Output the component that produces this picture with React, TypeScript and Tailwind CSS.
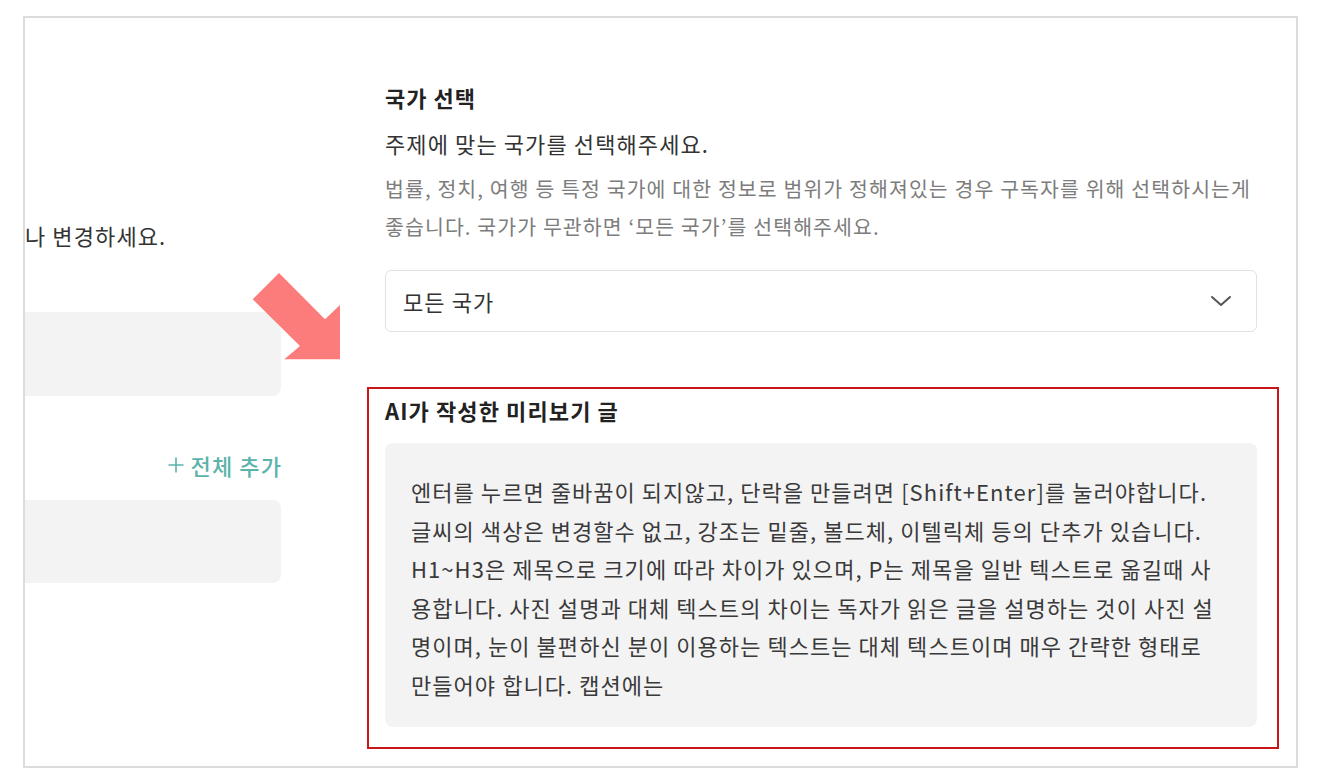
import React from 'react';

const FONT = { fontFamily: '"Noto Sans CJK KR", "Noto Sans", sans-serif' };

const previewLines = [
  '엔터를 누르면 줄바꿈이 되지않고, 단락을 만들려면 [Shift+Enter]를 눌러야합니다.',
  '글씨의 색상은 변경할수 없고, 강조는 밑줄, 볼드체, 이텔릭체 등의 단추가 있습니다.',
  'H1~H3은 제목으로 크기에 따라 차이가 있으며, P는 제목을 일반 텍스트로 옮길때 사',
  '용합니다. 사진 설명과 대체 텍스트의 차이는 독자가 읽은 글을 설명하는 것이 사진 설',
  '명이며, 눈이 불편하신 분이 이용하는 텍스트는 대체 텍스트이며 매우 간략한 형태로',
  '만들어야 합니다. 캡션에는',
];

function Arrow() {
  return (
    <svg
      className="absolute left-[250px] top-[270px]"
      width="92"
      height="92"
      viewBox="0 0 92 92"
      aria-hidden
    >
      <polygon
        points="29,3 75,49.3 90,35 90,89.3 34.3,89.3 50,76 2.7,29.3"
        fill="#fb7c7a"
      />
    </svg>
  );
}

function Chevron() {
  return (
    <svg width="22" height="12" viewBox="0 0 22 12" aria-hidden>
      <polyline
        points="2,2 11,10 20,2"
        fill="none"
        stroke="#555"
        strokeWidth="2"
        strokeLinecap="round"
        strokeLinejoin="round"
      />
    </svg>
  );
}

function PlusIcon() {
  return (
    <svg width="18" height="18" viewBox="0 0 18 18" aria-hidden>
      <path d="M9 1.5v15M1.5 9h15" stroke="#5bb3ab" strokeWidth="1.6" />
    </svg>
  );
}

function LeftColumn() {
  return (
    <div className="flex w-[256px] shrink-0 flex-col pt-[202px]">
      <p className="whitespace-nowrap text-[22px] leading-[30px] tracking-[1.1px] text-[#333]">나 변경하세요.</p>
      <div className="mt-[62px] h-[84px] rounded-r-lg bg-[#f3f3f3]" />
      <div className="mt-[54px] flex items-center justify-end gap-[6px]">
        <PlusIcon />
        <span className="-mr-[1px] text-[22px] leading-[30px] font-medium tracking-[1.1px] text-[#5bb3ab]">
          전체 추가
        </span>
      </div>
      <div className="mt-[20px] h-[83px] rounded-r-lg bg-[#f3f3f3]" />
    </div>
  );
}

function CountrySection() {
  return (
    <div className="flex flex-col">
      <h2 className="text-[22px] leading-[30px] font-bold tracking-[1px] text-[#222]">국가 선택</h2>
      <p className="mt-[16px] text-[22px] leading-[30px] tracking-[1.1px] text-[#333]">
        주제에 맞는 국가를 선택해주세요.
      </p>
      <p className="mt-[11px] whitespace-nowrap text-[20.5px] leading-[38px] tracking-[1.1px] text-[#7d7d7d]">
        법률, 정치, 여행 등 특정 국가에 대한 정보로 범위가 정해져있는 경우 구독자를 위해 선택하시는게
        <br />
        좋습니다. 국가가 무관하면 ‘모든 국가’를 선택해주세요.
      </p>
      <div className="mt-[25px] flex h-[62px] items-center justify-between rounded-md border border-[#e2e2e2] bg-white pl-[17px] pr-[24px]">
        <span className="text-[22px] tracking-[1.1px] text-[#333]">모든 국가</span>
        <Chevron />
      </div>
    </div>
  );
}

function PreviewSection() {
  return (
    <div className="mt-[55px] -ml-[18px] -mr-[22px] border-2 border-[#c8161d] pl-[16px] pr-[20px] pt-[6px] pb-[20px]">
      <h3 className="text-[22px] leading-[30px] font-bold tracking-[1.1px] text-[#222]">AI가 작성한 미리보기 글</h3>
      <div className="mt-[18px] h-[284px] rounded-lg bg-[#f3f3f4] px-[26px] pt-[29px]">
        {previewLines.map((line) => (
          <p key={line} className="whitespace-nowrap text-[22px] leading-[38.5px] tracking-[1.05px] text-[#3a3a3a]">
            {line}
          </p>
        ))}
      </div>
    </div>
  );
}

export default function App() {
  return (
    <div className="relative h-[783px] w-[1320px] bg-white pl-[23px] pt-[16px]" style={FONT}>
      <div className="flex h-[752px] w-[1275px] overflow-hidden border-2 border-[#dcdcdc]">
        <LeftColumn />
        <div className="ml-[104px] flex w-[872px] shrink-0 flex-col pt-[64px]">
          <CountrySection />
          <PreviewSection />
        </div>
      </div>
      <Arrow />
    </div>
  );
}
